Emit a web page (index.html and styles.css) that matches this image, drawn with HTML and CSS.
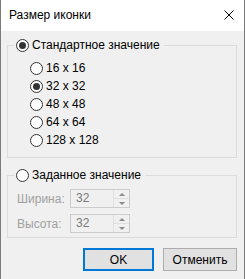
FILE: index.html
```html
<!DOCTYPE html>
<html lang="ru">
<head>
    <meta charset="UTF-8">
    <title>Размер иконки</title>
    <link rel="stylesheet" href="styles.css">
</head>
<body>
    <div class="window">
        <div class="titlebar">
            <span class="title">Размер иконки</span>
            <svg class="close" width="10" height="10" viewBox="0 0 10 10">
                <path d="M0.5 0.5 L9.5 9.5 M9.5 0.5 L0.5 9.5" stroke="#000" stroke-width="1" fill="none"/>
            </svg>
        </div>
        <div class="content">
            <fieldset class="group">
                <legend><span class="radio checked"></span>Стандартное значение</legend>
                <ul class="sizes">
                    <li><span class="radio"></span>16 x 16</li>
                    <li><span class="radio checked"></span>32 x 32</li>
                    <li><span class="radio"></span>48 x 48</li>
                    <li><span class="radio"></span>64 x 64</li>
                    <li><span class="radio"></span>128 x 128</li>
                </ul>
            </fieldset>
            <fieldset class="group custom">
                <legend><span class="radio"></span>Заданное значение</legend>
                <div class="field">
                    <span class="label">Ширина:</span>
                    <div class="spin">
                        <span class="value">32</span>
                        <div class="arrows">
                            <span class="up"></span>
                            <span class="down"></span>
                        </div>
                    </div>
                </div>
                <div class="field">
                    <span class="label">Высота:</span>
                    <div class="spin">
                        <span class="value">32</span>
                        <div class="arrows">
                            <span class="up"></span>
                            <span class="down"></span>
                        </div>
                    </div>
                </div>
            </fieldset>
            <div class="buttons">
                <button class="btn default">OK</button>
                <button class="btn cancel">Отменить</button>
            </div>
        </div>
    </div>
</body>
</html>
```
FILE: styles.css
```css
*{
    margin:0;
    padding:0;
    box-sizing: border-box;
}
body{
    background: #3c3c3c;
    font-family: "Liberation Sans", Arial, sans-serif;
    font-size: 12px;
    color: #000;
}
li{
    list-style: none;
}
.window{
    width: 245px;
    height: 279px;
    border-left: 1px solid #7a7a7a;
    border-right: 1px solid #7a7a7a;
    background: #f0f0f0;
}
.titlebar{
    height: 31px;
    background: #fff;
    display: flex;
    align-items: center;
    padding: 0 10px 1px 8px;
}
.title{
    flex: 1;
    line-height: 15px;
}
.close{
    display: block;
    margin-top: 0;
}
.content{
    padding: 7px 7px 0 6px;
}
.group{
    border: 1px solid #dcdcdc;
    padding: 6px 7px 8px 7px;
    min-width: 0;
}
.group legend{
    display: flex;
    align-items: center;
    height: 15px;
    line-height: 15px;
    padding: 0 4px 0 1px;
}
.radio{
    display: inline-block;
    width: 13px;
    height: 13px;
    border: 1px solid #333;
    border-radius: 50%;
    background: #fff;
    margin-right: 3px;
    position: relative;
    flex: none;
}
.radio.checked::after{
    content: "";
    position: absolute;
    left: 2px;
    top: 2px;
    width: 7px;
    height: 7px;
    border-radius: 50%;
    background: #333;
}
.sizes{
    padding-left: 15px;
}
.sizes li{
    height: 18px;
    display: flex;
    align-items: center;
}
.custom{
    margin-top: 10px;
    padding-bottom: 4px;
}
.field{
    display: flex;
    align-items: center;
    height: 19px;
    margin-bottom: 6px;
}
.field:last-child{
    margin-bottom: 0;
}
.label{
    width: 55px;
    padding-left: 2px;
    color: #a0a0a0;
}
.spin{
    width: 60px;
    height: 19px;
    border: 1px solid #cccccc;
    display: flex;
}
.value{
    flex: 1;
    padding-left: 5px;
    line-height: 17px;
    color: #7a7a7a;
}
.arrows{
    width: 16px;
    display: flex;
    flex-direction: column;
    border-left: 1px solid #e0e0e0;
}
.arrows span{
    flex: 1;
    display: flex;
    align-items: center;
    justify-content: center;
}
.arrows .up{
    border-bottom: 1px solid #e0e0e0;
}
.arrows .up::after{
    content: "";
    border-left: 3px solid transparent;
    border-right: 3px solid transparent;
    border-bottom: 3px solid #8a8a8a;
}
.arrows .down::after{
    content: "";
    border-left: 3px solid transparent;
    border-right: 3px solid transparent;
    border-top: 3px solid #8a8a8a;
}
.buttons{
    display: flex;
    justify-content: flex-end;
    gap: 9px;
    margin-top: 10px;
    padding-right: 0;
}
.btn{
    height: 23px;
    background: #e1e1e1;
    border: 1px solid #adadad;
    font-family: inherit;
    font-size: 12px;
    color: #000;
}
.default{
    width: 71px;
    border: 2px solid #0078d7;
}
.cancel{
    width: 74px;
}
```
